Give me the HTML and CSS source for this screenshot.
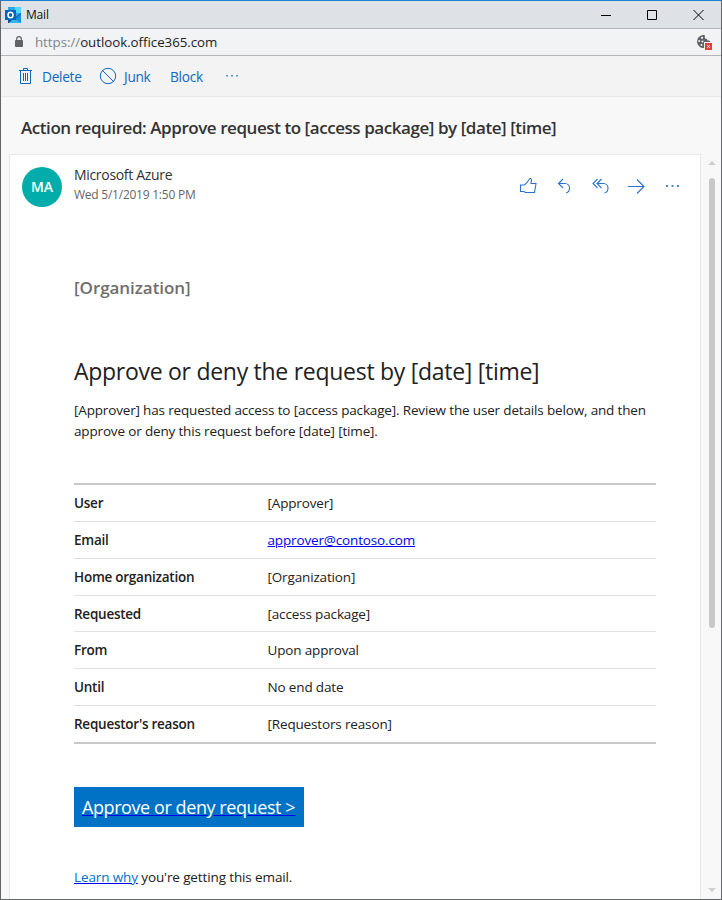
FILE: index.html
```html
<!DOCTYPE html>
<html lang="en">
<head>
<meta charset="utf-8">
<title>Mail</title>
<link rel="stylesheet" href="styles.css">
</head>
<body>
<div class="window">
  <header class="titlebar">
    <svg class="app-icon" width="16" height="16" viewBox="0 0 16 16">
      <path fill="#0f5298" d="M3 0h13v16H3z"/>
      <path fill="#28a8ea" d="M3 0h6.500v6H3z"/>
      <path fill="#50d9ff" d="M9.500 0H16v6H9.500z"/>
      <path fill="#0078d4" d="M3 6h6.500v5H3z"/>
      <path fill="#28a8ea" d="M9.500 6H16L9.500 11z"/>
      <path fill="#1490df" d="M4 16l12-9v9z"/>
      <path fill="#35b8f1" d="M9 11l7 5H4z"/>
      <path fill="#0364b8" d="M0 3h11v10H0z"/>
      <ellipse cx="5.500" cy="8" rx="2.500" ry="2.700" fill="none" stroke="#fff" stroke-width="1.600"/>
    </svg>
    <span class="app-name">Mail</span>
    <svg class="controls" width="104" height="12" viewBox="0 0 104 12" fill="none" stroke="#000">
      <path d="M0 6.500h10M46.500 1.500h9v9h-9zM92.500 1l10 10M102.500 1l-10 10"/>
    </svg>
  </header>
  <div class="address">
    <svg class="lock" width="8" height="12" viewBox="0 0 8 12">
      <path d="M1.700 5V3a2.300 2.300 0 0 1 4.600 0v2" fill="none" stroke="#5f6368" stroke-width="1.200"/>
      <rect y="4" width="8" height="7" rx=".8" fill="#5f6368"/>
    </svg>
    <span class="url"><span class="scheme">https://</span>outlook.office365.com</span>
    <svg class="cookie" width="16" height="16" viewBox="0 0 16 16">
      <path fill="#5f6368" d="M7 1a6.500 6.500 0 1 0 1 13V8h6c0-1-.5-1.500-1.500-1.500C11.500 6.500 11 6 11 5 9 5 8.300 4 9 1.500 8.500 1 7.800 1 7 1z"/>
      <g fill="#f1f3f4"><circle cx="6" cy="3.800" r="1.100"/><circle cx="3.200" cy="7" r="1"/><circle cx="6.500" cy="7.500" r="1"/><circle cx="5.500" cy="11" r="1"/></g>
      <path fill="#db4437" d="M9 9h7v7H9z"/>
      <path stroke="#fff" d="M11 11l3 3M14 11l-3 3"/>
    </svg>
  </div>
  <nav class="toolbar">
    <svg class="trash" width="14" height="16" viewBox="0 0 14 16" fill="none" stroke="#1068bf">
      <path d="M0 2.500h13M4.500 2.500v-2h4v2M1.500 2.500v13h10v-13M4.500 5v8M6.500 5v8M8.500 5v8"/>
    </svg>
    <span class="cmd delete">Delete</span>
    <svg class="ban" width="18" height="18" viewBox="0 0 18 18" fill="none" stroke="#1068bf">
      <circle cx="9" cy="9" r="7.700"/><path d="M3.500 3.500l11 11"/>
    </svg>
    <span class="cmd junk">Junk</span>
    <span class="cmd block">Block</span>
    <svg width="12" height="2" viewBox="0 0 12 2" fill="#5b94d6"><path d="M0 0h2v1.500H0zM5 0h2v1.500H5zM10 0h2v1.500h-2z"/></svg>
  </nav>
  <main class="content">
    <h1 class="subject"><span>Action required: Approve request to [access package] by [date] [time]</span></h1>
    <div class="reader">
      <article class="message">
        <div class="sender">
          <div class="avatar">MA</div>
          <div class="sender-text">
            <div class="name">Microsoft Azure</div>
            <div class="date">Wed 5/1/2019 1:50 PM</div>
          </div>
          <svg class="actions" width="162" height="18" viewBox="0 0 162 18" fill="none" stroke="#2b72d2" stroke-width="1.100">
            <path d="M1.500 8v6.500H5l1.200 1h9.300L17 6.500h-5l.5-3.500c0-1.500-1.500-2-2.200-.8L8 5.500 5.500 8z"/>
            <path d="M44 2l-4.500 4.500L44 11M39.500 6.500H46a4.600 4.600 0 0 1 4.500 4.500c0 2.500-1.500 4.500-3.500 5"/>
            <path d="M78.500 2L74 6.500l4.500 4.500M82.500 2L78 6.500l4.500 4.500M78 6.500h6.500A4.600 4.600 0 0 1 89 11c0 2.500-1.500 4.500-3.500 5"/>
            <path d="M109 9.500h16M118 2.500l7 7-7 7"/>
            <path stroke="none" fill="#4b86d8" d="M147 8h2v2h-2zM152.500 8h2v2h-2zM158 8h2v2h-2z"/>
          </svg>
        </div>
        <div class="mail">
          <div class="org">[Organization]</div>
          <h2 class="heading">Approve or deny the request by [date] [time]</h2>
          <p class="intro"><span class="line1">[Approver] has requested access to [access package]. Review the user details below, and then</span><br><span class="line2">approve or deny this request before [date] [time].</span></p>
          <dl class="details">
            <div class="row"><dt>User</dt><dd>[Approver]</dd></div>
            <div class="row"><dt>Email</dt><dd><a class="email" href="#">approver@contoso.com</a></dd></div>
            <div class="row"><dt>Home organization</dt><dd>[Organization]</dd></div>
            <div class="row"><dt>Requested</dt><dd>[access package]</dd></div>
            <div class="row"><dt>From</dt><dd>Upon approval</dd></div>
            <div class="row"><dt>Until</dt><dd>No end date</dd></div>
            <div class="row"><dt>Requestor's reason</dt><dd>[Requestors reason]</dd></div>
          </dl>
          <a class="button" href="#">Approve or deny request &gt;</a>
          <p class="footer"><a href="#">Learn why</a> you're getting this email.</p>
        </div>
      </article>
      <div class="scrollbar">
        <svg width="8" height="4" viewBox="0 0 8 4" fill="#cbd0d4"><path d="M4 0l4 4H0z"/></svg>
        <div class="thumb"></div>
        <svg class="down" width="8" height="4" viewBox="0 0 8 4" fill="#cbd0d4"><path d="M0 0h8L4 4z"/></svg>
      </div>
    </div>
  </main>
</div>
</body>
</html>
```
FILE: styles.css
```css
* { box-sizing: border-box; }
body { margin: 0; font-family: "Open Sans", "Noto Sans", sans-serif; font-size: 14px; color: #212121; }
h1, h2, p, dl, dd { margin: 0; }
svg { flex: none; display: block; }
span, .name, .date, .org, h2, dt, dd, .button, .footer { white-space: nowrap; }

.window { width: 722px; height: 900px; display: flex; flex-direction: column; overflow: hidden; background: #f8f8f8; border: 1px solid #65666a; border-top-color: #1a7fd4; }

.titlebar { height: 28px; flex: none; display: flex; align-items: center; padding: 0 16px 0 4px; background: #dee1e6; border-bottom: 1px solid #b2b3b5; }
.app-name { margin-left: 5px; font-size: 12px; letter-spacing: -.2px; color: #111; }
.controls { margin-left: auto; }

.address { height: 27px; flex: none; display: flex; align-items: center; padding: 0 9px 0 14px; background: #f1f3f4; border-bottom: 1px solid #b5b6b7; }
.url { margin-left: 12px; font-size: 13.300px; letter-spacing: -.030px; color: #202124; }
.scheme { color: #80868b; }
.cookie { margin-left: auto; }

.toolbar { height: 41px; flex: none; display: flex; align-items: center; padding-left: 18px; background: #f3f3f3; border-bottom: 1px solid #e8e8e8; color: #1068bf; }
.cmd { letter-spacing: -.3px; font-size: 13.700px; }
.delete { width: 57px; margin-left: 9px; }
.junk { width: 46px; margin-left: 7px; }
.block { width: 56px; }

.content { flex: 1; min-height: 0; display: flex; flex-direction: column; }
.subject { height: 57px; flex: none; display: flex; align-items: center; padding: 3px 0 0 20px; font-size: 17px; font-weight: 600; letter-spacing: -.440px; color: #333; }
.reader { flex: 1; min-height: 0; display: flex; }
.message { width: 692px; flex: none; margin-left: 8px; overflow: hidden; background: #fff; border: 1px solid #e8e8e8; border-bottom: 0; }

.sender { display: flex; align-items: flex-start; height: 64px; padding: 12px 0 0 12px; }
.avatar { width: 40px; height: 40px; border-radius: 50%; background: #00adab; color: #fff; font-weight: 600; line-height: 40px; text-align: center; }
.sender-text { width: 160px; margin: -1px 0 0 12px; }
.name { line-height: 18px; color: #333; letter-spacing: -.320px; }
.date { margin-top: 2px; font-size: 12px; line-height: 18px; letter-spacing: -.240px; color: #666; }
.actions { margin: 10px 19px 0 auto; }

.mail { width: 582px; margin-left: 64px; }
.org { margin-top: 57px; font-size: 17px; font-weight: 600; line-height: 24px; letter-spacing: -.050px; color: #6e6e6e; }
.heading { margin-top: 55px; font-size: 23px; font-weight: 400; line-height: 32px; letter-spacing: -.280px; }
.intro { margin-top: 13px; font-size: 13.500px; line-height: 21px; letter-spacing: -.160px; }
.details { margin-top: 41px; border-top: 2px solid #c8c8c8; border-bottom: 2px solid #c8c8c8; }
.row { display: flex; align-items: center; height: 36.860px; border-bottom: 1px solid #e0e0e0; font-size: 13.500px; letter-spacing: -.150px; }
.row:last-child { height: 35.840px; border-bottom: 0; }
dt { width: 193px; font-weight: 600; letter-spacing: -.250px; }
dd { padding-left: .5px; }
.email { color: #00e; }
.button { display: block; width: 230px; height: 40px; margin-top: 43px; padding-left: 8px; background: #0072c6; color: #fff; font-size: 18px; line-height: 40px; letter-spacing: -.420px; text-decoration-color: #00e; }
.footer { margin-top: 40px; font-size: 13.500px; line-height: 21px; letter-spacing: -.120px; }
.footer a { color: #0072c6; text-decoration-color: #00e; }

.scrollbar { flex: 1; display: flex; flex-direction: column; align-items: center; padding: 7px 0 0 2px; }
.thumb { width: 6px; height: 450px; margin-top: 13px; border-radius: 3px; background: #c8c8c8; }
.down { margin: auto 0 7px; }
```
